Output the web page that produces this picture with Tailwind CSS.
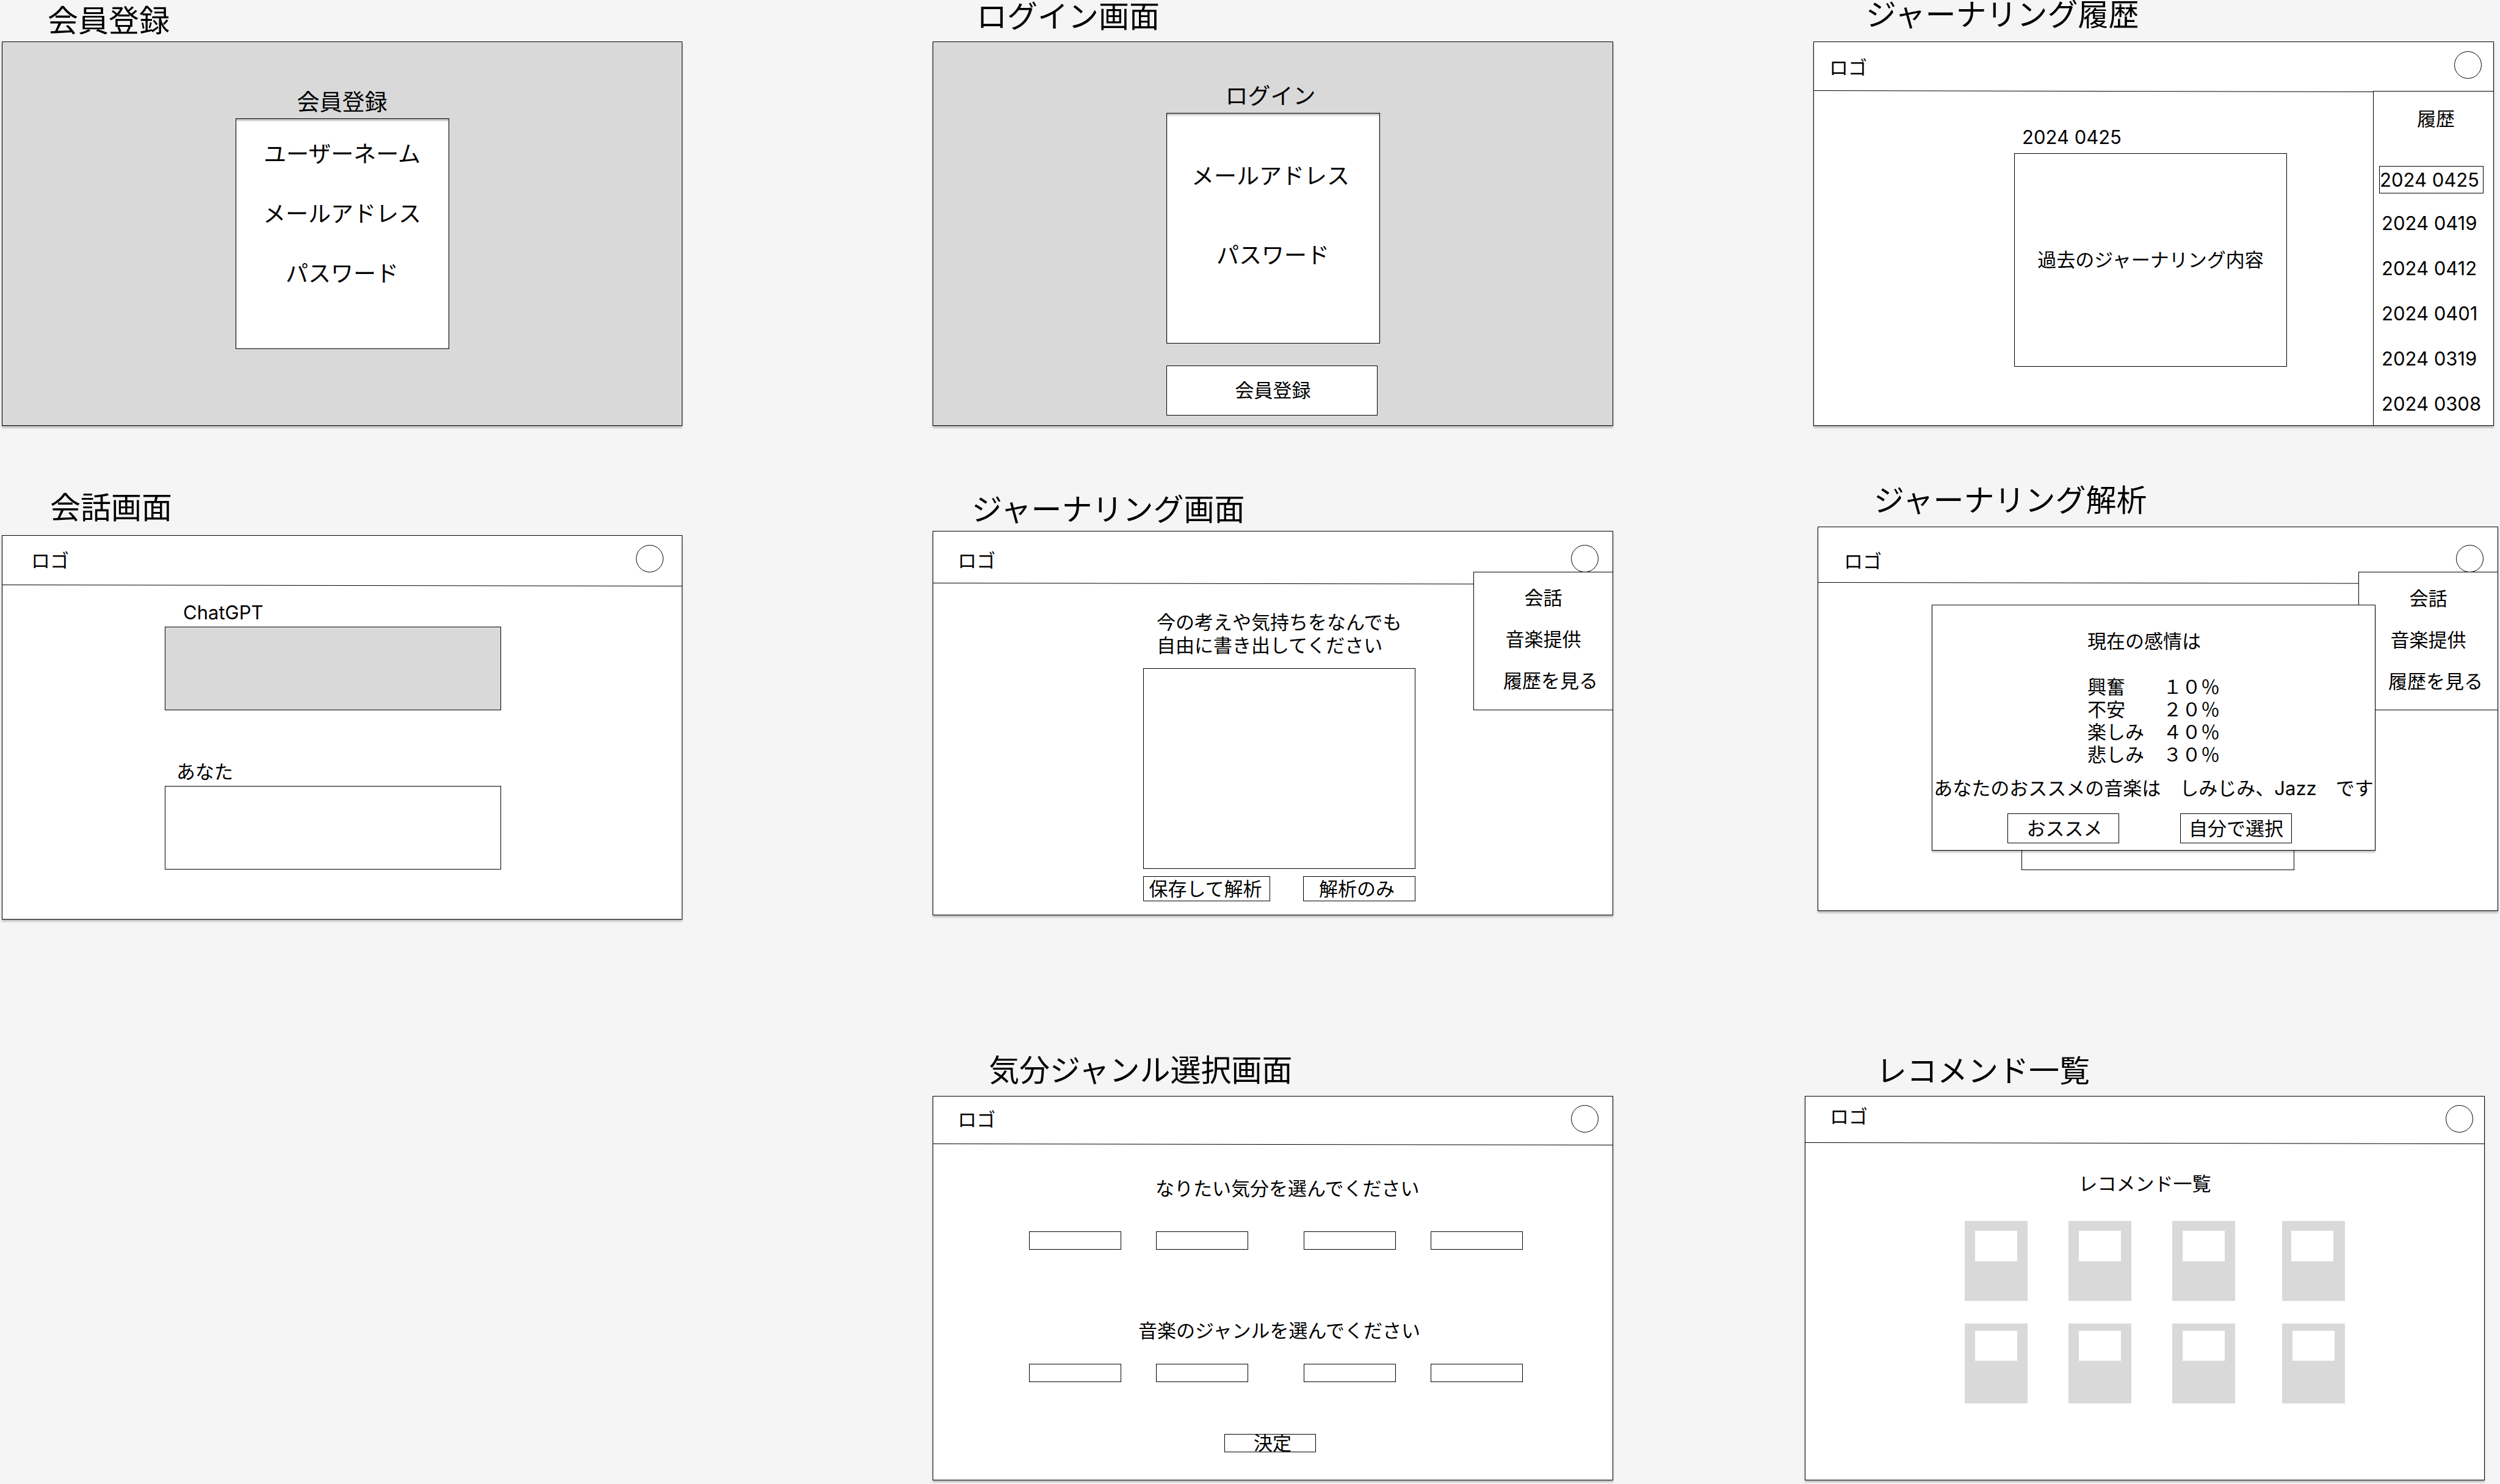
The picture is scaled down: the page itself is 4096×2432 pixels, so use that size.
<!DOCTYPE html>
<html lang="ja">
<head>
<meta charset="utf-8">
<meta name="viewport" content="width=device-width, initial-scale=1">
<title>ジャーナリングアプリ ワイヤーフレーム</title>
<script src="https://cdn.jsdelivr.net/npm/@tailwindcss/browser@4"></script>
</head>
<body class="min-h-screen bg-[#f5f5f5] font-['Inter','Noto_Sans_CJK_JP',sans-serif] text-[31px] leading-[38px] text-black">
<main class="grid grid-cols-[1528fr_1429fr_1139fr]">

  <!-- Column 1 -->
  <div class="flex flex-col pl-[3px] pr-[410px]">
    <section class="pt-[10px]">
      <h2 class="mb-[10px] pl-[75px] text-[50px] leading-[48px]">会員登録</h2>
      <div class="flex h-[630px] flex-col items-center border border-black bg-[#d9d9d9] pt-[75px] shadow-[0_3px_3px_#00000040]">
        <h3 class="mb-[2px] text-[37px] leading-[48px]">会員登録</h3>
        <div class="flex h-[378px] w-[350px] flex-col items-center gap-[50px] border border-black bg-white pt-[34px] text-[37px] leading-[48px] shadow-[inset_0_3px_3px_#00000040]">
          <p>ユーザーネーム</p>
          <p>メールアドレス</p>
          <p>パスワード</p>
        </div>
      </div>
    </section>

    <section class="pt-[110px]">
      <h2 class="mb-[21px] pl-[79px] text-[50px] leading-[48px]">会話画面</h2>
      <div class="h-[630px] border border-black bg-white shadow-[0_3px_3px_#00000040]">
        <header class="flex h-20 items-start justify-between pl-[47px] pr-[30px] pt-[15px]">
          <a href="#" class="mt-[7px]">ロゴ</a>
          <button type="button" aria-label="アカウント" class="size-[45px] rounded-full border border-black"></button>
        </header>
        <svg class="block h-[3px] w-full" aria-hidden="true"><line x1="0" y1=".5" x2="100%" y2="2.5" stroke="#000"/></svg>
        <div class="flex flex-col pl-[266px] pt-6">
          <h3 class="mb-1 pl-[30px]">ChatGPT</h3>
          <div class="h-[137px] w-[551px] border border-black bg-[#d9d9d9]"></div>
          <label for="you" class="mb-1 mt-[82px] pl-[19px]">あなた</label>
          <textarea id="you" class="block h-[137px] w-[551px] resize-none border border-black bg-white"></textarea>
        </div>
      </div>
    </section>
  </div>

  <!-- Column 2 -->
  <div class="flex flex-col pr-[314px]">
    <section class="pt-[3px]">
      <h2 class="mb-[17px] pl-[72px] text-[50px] leading-[48px]">ログイン画面</h2>
      <div class="flex h-[630px] flex-col items-center border border-black bg-[#d9d9d9] pt-[65px] shadow-[0_3px_3px_#00000040]">
        <h3 class="mb-[3px] pr-2 text-[37px] leading-[48px]">ログイン</h3>
        <div class="flex w-[350px] flex-col items-start gap-9">
          <div class="flex h-[378px] w-full flex-col items-center gap-[82px] border border-black bg-white pt-[79px] text-[37px] leading-[48px] shadow-[inset_0_3px_3px_#00000040]">
            <p class="pr-2">メールアドレス</p>
            <p>パスワード</p>
          </div>
          <button type="button" class="h-[82px] w-[346px] border border-black bg-white pl-1">会員登録</button>
        </div>
      </div>
    </section>

    <section class="pt-[113px]">
      <h2 class="mb-[11px] pl-[64px] text-[50px] leading-[48px]">ジャーナリング画面</h2>
      <div class="relative h-[630px] border border-black bg-white shadow-[0_3px_3px_#00000040]">
        <header class="flex h-[84px] items-start justify-between pl-10 pr-[23px] pt-[22px]">
          <a href="#" class="mt-[7px]">ロゴ</a>
          <button type="button" aria-label="アカウント" class="size-[45px] rounded-full border border-black"></button>
        </header>
        <svg class="block h-[3px] w-full" aria-hidden="true"><line x1="0" y1=".5" x2="100%" y2="2.5" stroke="#000"/></svg>
        <nav class="absolute -right-px top-[66px] flex h-[227px] w-[229px] flex-col items-center gap-[30px] border border-black bg-white pt-[23px]">
          <a href="#">会話</a>
          <a href="#">音楽提供</a>
          <a href="#" class="pl-6">履歴を見る</a>
        </nav>
        <div class="flex w-[791px] flex-col pl-[344px] pt-[43px]">
          <label for="journal" class="mb-[18px] pl-[22px]">今の考えや気持ちをなんでも<br>自由に書き出してください</label>
          <textarea id="journal" class="block h-[329px] w-[446px] resize-none border border-black bg-white"></textarea>
          <div class="mt-3 flex w-[446px] justify-between">
            <button type="button" class="h-[41px] w-[208px] border border-black pr-1">保存して解析</button>
            <button type="button" class="h-[41px] w-[184px] border border-black pr-2">解析のみ</button>
          </div>
        </div>
      </div>
    </section>

    <section class="pt-[230px]">
      <h2 class="mb-[18px] pl-[92px] text-[50px] leading-[48px]">気分ジャンル選択画面</h2>
      <div class="h-[630px] border border-black bg-white shadow-[0_3px_3px_#00000040]">
        <header class="flex h-[77px] items-start justify-between pl-10 pr-[23px] pt-[14px]">
          <a href="#" class="mt-[5px]">ロゴ</a>
          <button type="button" aria-label="アカウント" class="size-[45px] rounded-full border border-black"></button>
        </header>
        <svg class="block h-[3px] w-full" aria-hidden="true"><line x1="0" y1=".5" x2="100%" y2="2.5" stroke="#000"/></svg>
        <div class="flex flex-col pl-[157px] pt-[52px]">
          <h3 class="mb-[51px] pl-[207px]">なりたい気分を選んでください</h3>
          <div class="flex h-[30px] gap-[91px]">
            <div class="flex gap-[57px]">
              <button type="button" aria-label="気分 1" class="w-[151px] border border-black"></button>
              <button type="button" aria-label="気分 2" class="w-[151px] border border-black"></button>
            </div>
            <div class="flex gap-[57px]">
              <button type="button" aria-label="気分 3" class="w-[151px] border border-black"></button>
              <button type="button" aria-label="気分 4" class="w-[151px] border border-black"></button>
            </div>
          </div>
          <h3 class="mb-[35px] mt-[114px] pl-[179px]">音楽のジャンルを選んでください</h3>
          <div class="flex h-[30px] gap-[91px]">
            <div class="flex gap-[57px]">
              <button type="button" aria-label="ジャンル 1" class="w-[151px] border border-black"></button>
              <button type="button" aria-label="ジャンル 2" class="w-[151px] border border-black"></button>
            </div>
            <div class="flex gap-[57px]">
              <button type="button" aria-label="ジャンル 3" class="w-[151px] border border-black"></button>
              <button type="button" aria-label="ジャンル 4" class="w-[151px] border border-black"></button>
            </div>
          </div>
          <button type="button" class="ml-[320px] mt-[85px] h-[30px] w-[150px] border border-black pl-2 leading-[28px]">決定</button>
        </div>
      </div>
    </section>
  </div>

  <!-- Column 3 -->
  <div class="flex flex-col">
    <section class="pl-[14px] pr-[10px]">
      <h2 class="mb-5 pl-[86px] text-[50px] leading-[48px]">ジャーナリング履歴</h2>
      <div class="flex h-[630px] flex-col border border-black bg-white shadow-[0_3px_3px_#00000040]">
        <header class="flex h-[79px] items-start justify-between pl-[25px] pr-[19px] pt-[15px]">
          <a href="#" class="mt-2">ロゴ</a>
          <button type="button" aria-label="アカウント" class="size-[45px] rounded-full border border-black"></button>
        </header>
        <div class="flex flex-1">
          <div class="flex-1">
            <svg class="block h-[3px] w-full" aria-hidden="true"><line x1="0" y1=".5" x2="100%" y2="2.5" stroke="#000"/></svg>
            <div class="flex flex-col pl-[328px] pt-[55px]">
              <h3 class="mb-[7px] pl-[13px]">2024 0425</h3>
              <div class="flex h-[350px] w-[447px] items-center justify-center border border-black">過去のジャーナリング内容</div>
            </div>
          </div>
          <aside class="mt-px flex w-[197px] flex-col border-l border-t border-black pl-[9px] pt-[26px]">
            <h3 class="mb-[58px] pl-[62px]">履歴</h3>
            <a href="#" class="flex h-[45px] w-[171px] items-center border border-black">2024 0425</a>
            <ul class="flex flex-col gap-9 pl-1 pt-[30px]">
              <li><a href="#">2024 0419</a></li>
              <li><a href="#">2024 0412</a></li>
              <li><a href="#">2024 0401</a></li>
              <li><a href="#">2024 0319</a></li>
              <li><a href="#">2024 0308</a></li>
            </ul>
          </aside>
        </div>
      </div>
    </section>

    <section class="pl-[21px] pr-[3px] pt-[98px]">
      <h2 class="mb-[19px] pl-[92px] text-[50px] leading-[48px]">ジャーナリング解析</h2>
      <div class="relative h-[630px] border border-black bg-white shadow-[0_3px_3px_#00000040]">
        <header class="flex h-[90px] items-start justify-between pl-[42px] pr-[23px] pt-[29px]">
          <a href="#" class="mt-2">ロゴ</a>
          <button type="button" aria-label="アカウント" class="size-[45px] rounded-full border border-black"></button>
        </header>
        <svg class="block h-[3px] w-full" aria-hidden="true"><line x1="0" y1=".5" x2="100%" y2="2.5" stroke="#000"/></svg>
        <nav class="absolute -right-px top-[73px] flex h-[227px] w-[229px] flex-col items-center gap-[30px] border border-black bg-white pt-[24px]">
          <a href="#">会話</a>
          <a href="#">音楽提供</a>
          <a href="#" class="pl-6">履歴を見る</a>
        </nav>
        <div class="pl-[333px] pt-[119px]">
          <div class="h-[350px] w-[447px] border border-black"></div>
        </div>
        <div role="dialog" aria-label="解析結果" class="absolute left-[186px] top-[127px] flex h-[403px] w-[727px] flex-col border border-black bg-white pt-[40px] shadow-[0_3px_3px_#00000040]">
          <div class="pl-[254px] leading-[37px]">
            <p class="mb-[38px]">現在の感情は</p>
            <ul>
              <li>興奮　　１０％</li>
              <li>不安　　２０％</li>
              <li>楽しみ　４０％</li>
              <li>悲しみ　３０％</li>
            </ul>
          </div>
          <p class="mb-[22px] mt-[18px] whitespace-nowrap text-center">あなたのおススメの音楽は　しみじみ、Jazz　です</p>
          <div class="flex gap-[100px] pl-[123px]">
            <button type="button" class="h-[49px] w-[183px] border border-black pl-1">おススメ</button>
            <button type="button" class="h-[49px] w-[183px] border border-black">自分で選択</button>
          </div>
        </div>
      </div>
    </section>

    <section class="pr-[25px] pt-[238px]">
      <h2 class="mb-[17px] pl-[117px] text-[50px] leading-[48px]">レコメンド一覧</h2>
      <div class="h-[630px] border border-black bg-white shadow-[0_3px_3px_#00000040]">
        <header class="flex h-[75px] items-start justify-between pl-10 pr-[18px] pt-[14px]">
          <a href="#">ロゴ</a>
          <button type="button" aria-label="アカウント" class="size-[45px] rounded-full border border-black"></button>
        </header>
        <svg class="block h-[3px] w-full" aria-hidden="true"><line x1="0" y1=".5" x2="100%" y2="2.5" stroke="#000"/></svg>
        <h3 class="mb-[42px] mt-[46px] text-center">レコメンド一覧</h3>
        <div class="flex flex-col gap-[37px] pl-[261px]">
          <div class="flex gap-[77px]">
            <div class="flex gap-[67px]">
              <div class="h-[131px] w-[103px] bg-[#d9d9d9] px-[17px] pt-4"><div class="h-[50px] bg-white"></div></div>
              <div class="h-[131px] w-[103px] bg-[#d9d9d9] px-[17px] pt-4"><div class="h-[50px] bg-white"></div></div>
              <div class="h-[131px] w-[103px] bg-[#d9d9d9] px-[17px] pt-4"><div class="h-[50px] bg-white"></div></div>
            </div>
            <div class="h-[131px] w-[103px] bg-[#d9d9d9] pl-[15px] pr-[19px] pt-4"><div class="h-[50px] bg-white"></div></div>
          </div>
          <div class="flex gap-[77px]">
            <div class="flex gap-[67px]">
              <div class="h-[131px] w-[103px] bg-[#d9d9d9] px-[17px] pt-3"><div class="h-[49px] bg-white"></div></div>
              <div class="h-[131px] w-[103px] bg-[#d9d9d9] px-[17px] pt-3"><div class="h-[49px] bg-white"></div></div>
              <div class="h-[131px] w-[103px] bg-[#d9d9d9] px-[17px] pt-3"><div class="h-[49px] bg-white"></div></div>
            </div>
            <div class="h-[131px] w-[103px] bg-[#d9d9d9] px-[17px] pt-3"><div class="h-[49px] bg-white"></div></div>
          </div>
        </div>
      </div>
    </section>
  </div>
</main>
</body>
</html>
